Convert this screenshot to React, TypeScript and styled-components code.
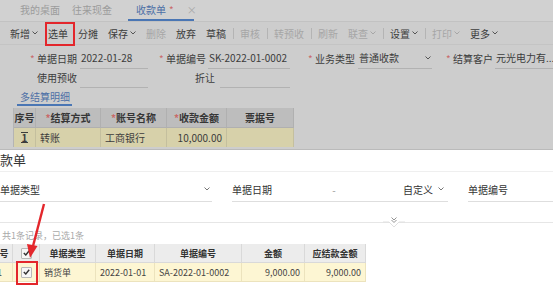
import React from "react";
import styled, { createGlobalStyle } from "styled-components";

const GlobalStyle = createGlobalStyle`
  html, body { margin: 0; padding: 0; }
  body {
    font-family: "Noto Sans CJK SC", "Noto Sans", sans-serif;
    font-size: 10px;
    overflow: hidden;
    white-space: nowrap;
  }
`;

const Page = styled.div`
  position: relative;
  width: 553px;
  height: 292px;
  overflow: hidden;
  background: #fff;
`;

/* ---------- dimmed page behind the dialog ---------- */

const Masked = styled.div`
  height: 150px;
  background: #cdcdcd;
  color: #3c3c3c;
  box-sizing: border-box;
  border-bottom: 1px solid #bababa;
`;

const TabBar = styled.div`
  height: 22px;
  display: flex;
  padding-left: 20px;
  box-sizing: border-box;
  border-bottom: 1px solid #c2c2c2;
  background: #d1d1d1;
`;

const Tab = styled.div<{ $active?: boolean; $w: number }>`
  width: ${p => p.$w}px;
  flex-shrink: 0;
  display: flex;
  align-items: center;
  gap: 3px;
  padding-left: ${p => (p.$active ? 8 : 0)}px;
  box-sizing: border-box;
  color: ${p => (p.$active ? "#4c6fa6" : "#9c9c9c")};
  border-bottom: 2px solid ${p => (p.$active ? "#4a76b4" : "transparent")};
`;

const Star = styled.span`
  color: #c96a6a;
`;

const Close = styled.span`
  margin-left: 10px;
  color: #a8a8a8;
`;

const Toolbar = styled.div`
  height: 22px;
  display: flex;
  align-items: center;
  padding-left: 5px;
  border-bottom: 1px solid #c4c4c4;
`;

const ToolItem = styled.span<{ $disabled?: boolean }>`
  display: inline-flex;
  align-items: center;
  gap: 2px;
  padding: 0 5px;
  color: ${p => (p.$disabled ? "#a6a6a6" : "#3c3c3c")};
`;

const Sep = styled.span`
  width: 1px;
  height: 11px;
  margin: 0 1.5px;
  background: #b4b4b4;
`;

const FormRow = styled.div<{ $h: number; $mt?: number }>`
  display: flex;
  align-items: flex-end;
  height: ${p => p.$h}px;
  margin-top: ${p => p.$mt ?? 0}px;
`;

const Label = styled.span<{ $w: number }>`
  width: ${p => p.$w}px;
  text-align: right;
  padding-bottom: 3px;
  color: #3c3c3c;
  flex-shrink: 0;
`;

const Value = styled.span<{ $w: number; $ml: number }>`
  width: ${p => p.$w}px;
  margin-left: ${p => p.$ml}px;
  display: flex;
  align-items: center;
  justify-content: space-between;
  padding: 0 1px 3px 1px;
  box-sizing: border-box;
  border-bottom: 1px solid #b2b2b2;
  overflow: hidden;
  flex-shrink: 0;
`;

const DetailTab = styled.div`
  margin: 2px 0 0 17px;
  width: 55px;
  height: 16px;
  padding-left: 3px;
  box-sizing: border-box;
  color: #4c6fa6;
  border-bottom: 2px solid #4a76b4;
  line-height: 14px;
`;

const MiniTable = styled.div`
  margin: 2px 0 0 13px;
  width: 280px;
  display: grid;
  grid-template-columns: 22px 65px 66px 60px 67px;
  border-left: 1px solid #b4b4b4;
`;

const MiniHead = styled.div`
  height: 20px;
  background: #bdbdbd;
  border-right: 1px solid #b0b0b0;
  border-bottom: 1px solid #b0b0b0;
  display: flex;
  align-items: center;
  justify-content: center;
  font-weight: bold;
  color: #363636;
  box-sizing: border-box;
`;

const MiniCell = styled.div<{ $align?: string }>`
  height: 19px;
  background: #d7d1aa;
  border-right: 1px solid #c4bf9e;
  display: flex;
  align-items: center;
  justify-content: ${p => p.$align ?? "flex-start"};
  padding: 0 4px;
  box-sizing: border-box;
  color: #3c3c3c;
`;

const RowMark = styled.span`
  font-weight: bold;
  border-top: 1px solid #3c3c3c;
  border-bottom: 1px solid #3c3c3c;
  line-height: 9px;
  padding: 0 1px;
`;

/* ---------- dialog ---------- */

const Dialog = styled.div`
  margin-left: -13px;
  height: 142px;
  color: #333;
  background: #fff;
`;

const DialogTitle = styled.div`
  height: 21px;
  line-height: 20px;
  font-size: 13px;
  color: #333;
  border-bottom: 1px solid #efefef;
`;

const FilterRow = styled.div`
  display: flex;
  padding: 5px 0 0 13px;
  gap: 20px;
`;

const FilterField = styled.div<{ $w: number }>`
  width: ${p => p.$w}px;
  height: 24px;
  display: flex;
  align-items: center;
  border-bottom: 1px solid #dedede;
  flex-shrink: 0;
  color: #333;
`;

const Grow = styled.span`
  flex: 1;
`;

const Dash = styled.span`
  width: 124px;
  flex-shrink: 0;
  text-align: center;
  color: #999;
`;

const Divider = styled.div`
  position: relative;
  margin-top: 20px;
  height: 1px;
  background: #e6e6e6;
`;

const Notch = styled.svg`
  position: absolute;
  left: 396px;
  top: -6px;
`;

const Info = styled.div`
  margin: 6px 0 0 15px;
  font-size: 9px;
  color: #a9a9a9;
`;

const Grid = styled.div`
  margin-top: 2px;
  width: 379px;
  display: grid;
  grid-template-columns: 26px 27px 56px 59px 87px 63px 61px;
  font-size: 9px;
`;

const Head = styled.div`
  height: 19px;
  background: #ececec;
  border-right: 1px solid #d9d9d9;
  border-bottom: 1px solid #d9d9d9;
  display: flex;
  align-items: center;
  justify-content: center;
  font-weight: bold;
  color: #333;
  box-sizing: border-box;
`;

const Cell = styled.div<{ $align?: string }>`
  height: 19px;
  background: #fdf6d3;
  border-right: 1px solid #ece3bd;
  border-bottom: 1px solid #ece3bd;
  display: flex;
  align-items: center;
  justify-content: ${p => p.$align ?? "flex-start"};
  padding: 0 4px;
  box-sizing: border-box;
  color: #444;
`;

const Check = styled.span`
  width: 9px;
  height: 9px;
  border: 1px solid #b8b8b8;
  background: #f6f6f6;
  border-radius: 1px;
  display: inline-flex;
  align-items: center;
  justify-content: center;
`;

/* ---------- annotations ---------- */

const RedBox = styled.div<{ $x: number; $y: number; $w: number; $h: number }>`
  position: absolute;
  left: ${p => p.$x}px;
  top: ${p => p.$y}px;
  width: ${p => p.$w}px;
  height: ${p => p.$h}px;
  border: 2px solid #e3262b;
  box-sizing: border-box;
`;

const Arrow = styled.svg`
  position: absolute;
  left: 20px;
  top: 200px;
`;

function Caret({ color = "#555" }: { color?: string }) {
  return (
    <svg width="6" height="4" viewBox="0 0 6 4">
      <path d="M0.5 0.5 L3 3 L5.5 0.5" fill="none" stroke={color} strokeWidth="1" />
    </svg>
  );
}

function Tick() {
  return (
    <svg width="7" height="6" viewBox="0 0 7 6">
      <path d="M0.8 3 L2.8 5 L6.2 0.8" fill="none" stroke="#333" strokeWidth="1.4" />
    </svg>
  );
}

function Req() {
  return <Star>* </Star>;
}

export default function App() {
  return (
    <Page>
      <GlobalStyle />
      <Masked>
        <TabBar>
          <Tab $w={52}>我的桌面</Tab>
          <Tab $w={56}>往来现金</Tab>
          <Tab $w={66} $active>
            收款单<Star>*</Star>
            <Close>×</Close>
          </Tab>
        </TabBar>
        <Toolbar>
          <ToolItem>新增<Caret /></ToolItem>
          <ToolItem>选单</ToolItem>
          <ToolItem>分摊</ToolItem>
          <ToolItem>保存<Caret /></ToolItem>
          <ToolItem $disabled>删除</ToolItem>
          <ToolItem>放弃</ToolItem>
          <ToolItem>草稿</ToolItem>
          <Sep />
          <ToolItem $disabled>审核</ToolItem>
          <Sep />
          <ToolItem $disabled>转预收</ToolItem>
          <Sep />
          <ToolItem $disabled>刷新</ToolItem>
          <ToolItem $disabled>联查<Caret color="#a6a6a6" /></ToolItem>
          <Sep />
          <ToolItem>设置<Caret /></ToolItem>
          <Sep />
          <ToolItem $disabled>打印<Caret color="#a6a6a6" /></ToolItem>
          <ToolItem>更多<Caret /></ToolItem>
        </Toolbar>

        <FormRow $h={20} $mt={4}>
          <Label $w={77}><Req />单据日期</Label>
          <Value $w={68} $ml={3}>2022-01-28</Value>
          <Label $w={58}><Req />单据编号</Label>
          <Value $w={82} $ml={2}>SK-2022-01-0002</Value>
          <Label $w={65}><Req />业务类型</Label>
          <Value $w={74} $ml={3}>普通收款 <Caret /></Value>
          <Label $w={61}><Req />结算客户</Label>
          <Value $w={70} $ml={2}>元光电力有...</Value>
        </FormRow>
        <FormRow $h={19}>
          <Label $w={77}>使用预收</Label>
          <Value $w={68} $ml={3}>&nbsp;</Value>
          <Label $w={67}>折让</Label>
          <Value $w={70} $ml={5}>&nbsp;</Value>
        </FormRow>

        <DetailTab>多结算明细</DetailTab>

        <MiniTable>
          <MiniHead>序号</MiniHead>
          <MiniHead><Req />结算方式</MiniHead>
          <MiniHead><Req />账号名称</MiniHead>
          <MiniHead><Req />收款金额</MiniHead>
          <MiniHead>票据号</MiniHead>
          <MiniCell $align="center"><RowMark>1</RowMark></MiniCell>
          <MiniCell>转账</MiniCell>
          <MiniCell>工商银行</MiniCell>
          <MiniCell $align="flex-end">10,000.00</MiniCell>
          <MiniCell />
        </MiniTable>
      </Masked>

      <Dialog>
        <DialogTitle>收款单</DialogTitle>
        <FilterRow>
          <FilterField $w={212}>
            单据类型<Grow /><Caret color="#777" />&nbsp;
          </FilterField>
          <FilterField $w={216}>
            单据日期<Dash>-</Dash><Grow />自定义&nbsp;&nbsp;<Caret color="#777" />&nbsp;&nbsp;
          </FilterField>
          <FilterField $w={110}>单据编号</FilterField>
        </FilterRow>
        <Divider>
          <Notch width="22" height="12" viewBox="0 0 22 12">
            <path d="M0 6 L6 6 L11 11 L16 6 L22 6" fill="#fff" stroke="#e0e0e0" strokeWidth="1" />
            <path d="M8.5 1.5 L11 4 L13.5 1.5 M8.5 4 L11 6.5 L13.5 4" fill="none" stroke="#888" strokeWidth="0.9" />
          </Notch>
        </Divider>
        <Info>共1条记录，已选1条</Info>
        <Grid>
          <Head>序号</Head>
          <Head><Check><Tick /></Check></Head>
          <Head>单据类型</Head>
          <Head>单据日期</Head>
          <Head>单据编号</Head>
          <Head>金额</Head>
          <Head>应结款金额</Head>
          <Cell $align="center">1</Cell>
          <Cell $align="center"><Check><Tick /></Check></Cell>
          <Cell>销货单</Cell>
          <Cell>2022-01-01</Cell>
          <Cell>SA-2022-01-0002</Cell>
          <Cell $align="flex-end">9,000.00</Cell>
          <Cell $align="flex-end">9,000.00</Cell>
        </Grid>
      </Dialog>

      <RedBox $x={45} $y={22} $w={30} $h={24} />
      <RedBox $x={16} $y={261} $w={22} $h={24} />
      <Arrow width="30" height="62" viewBox="0 0 30 62">
        <path d="M24 4 L12.5 48" stroke="#e3262b" strokeWidth="2.4" fill="none" />
        <path d="M7 44 L10 58 L17.5 46 Z" fill="#e3262b" />
      </Arrow>
    </Page>
  );
}
